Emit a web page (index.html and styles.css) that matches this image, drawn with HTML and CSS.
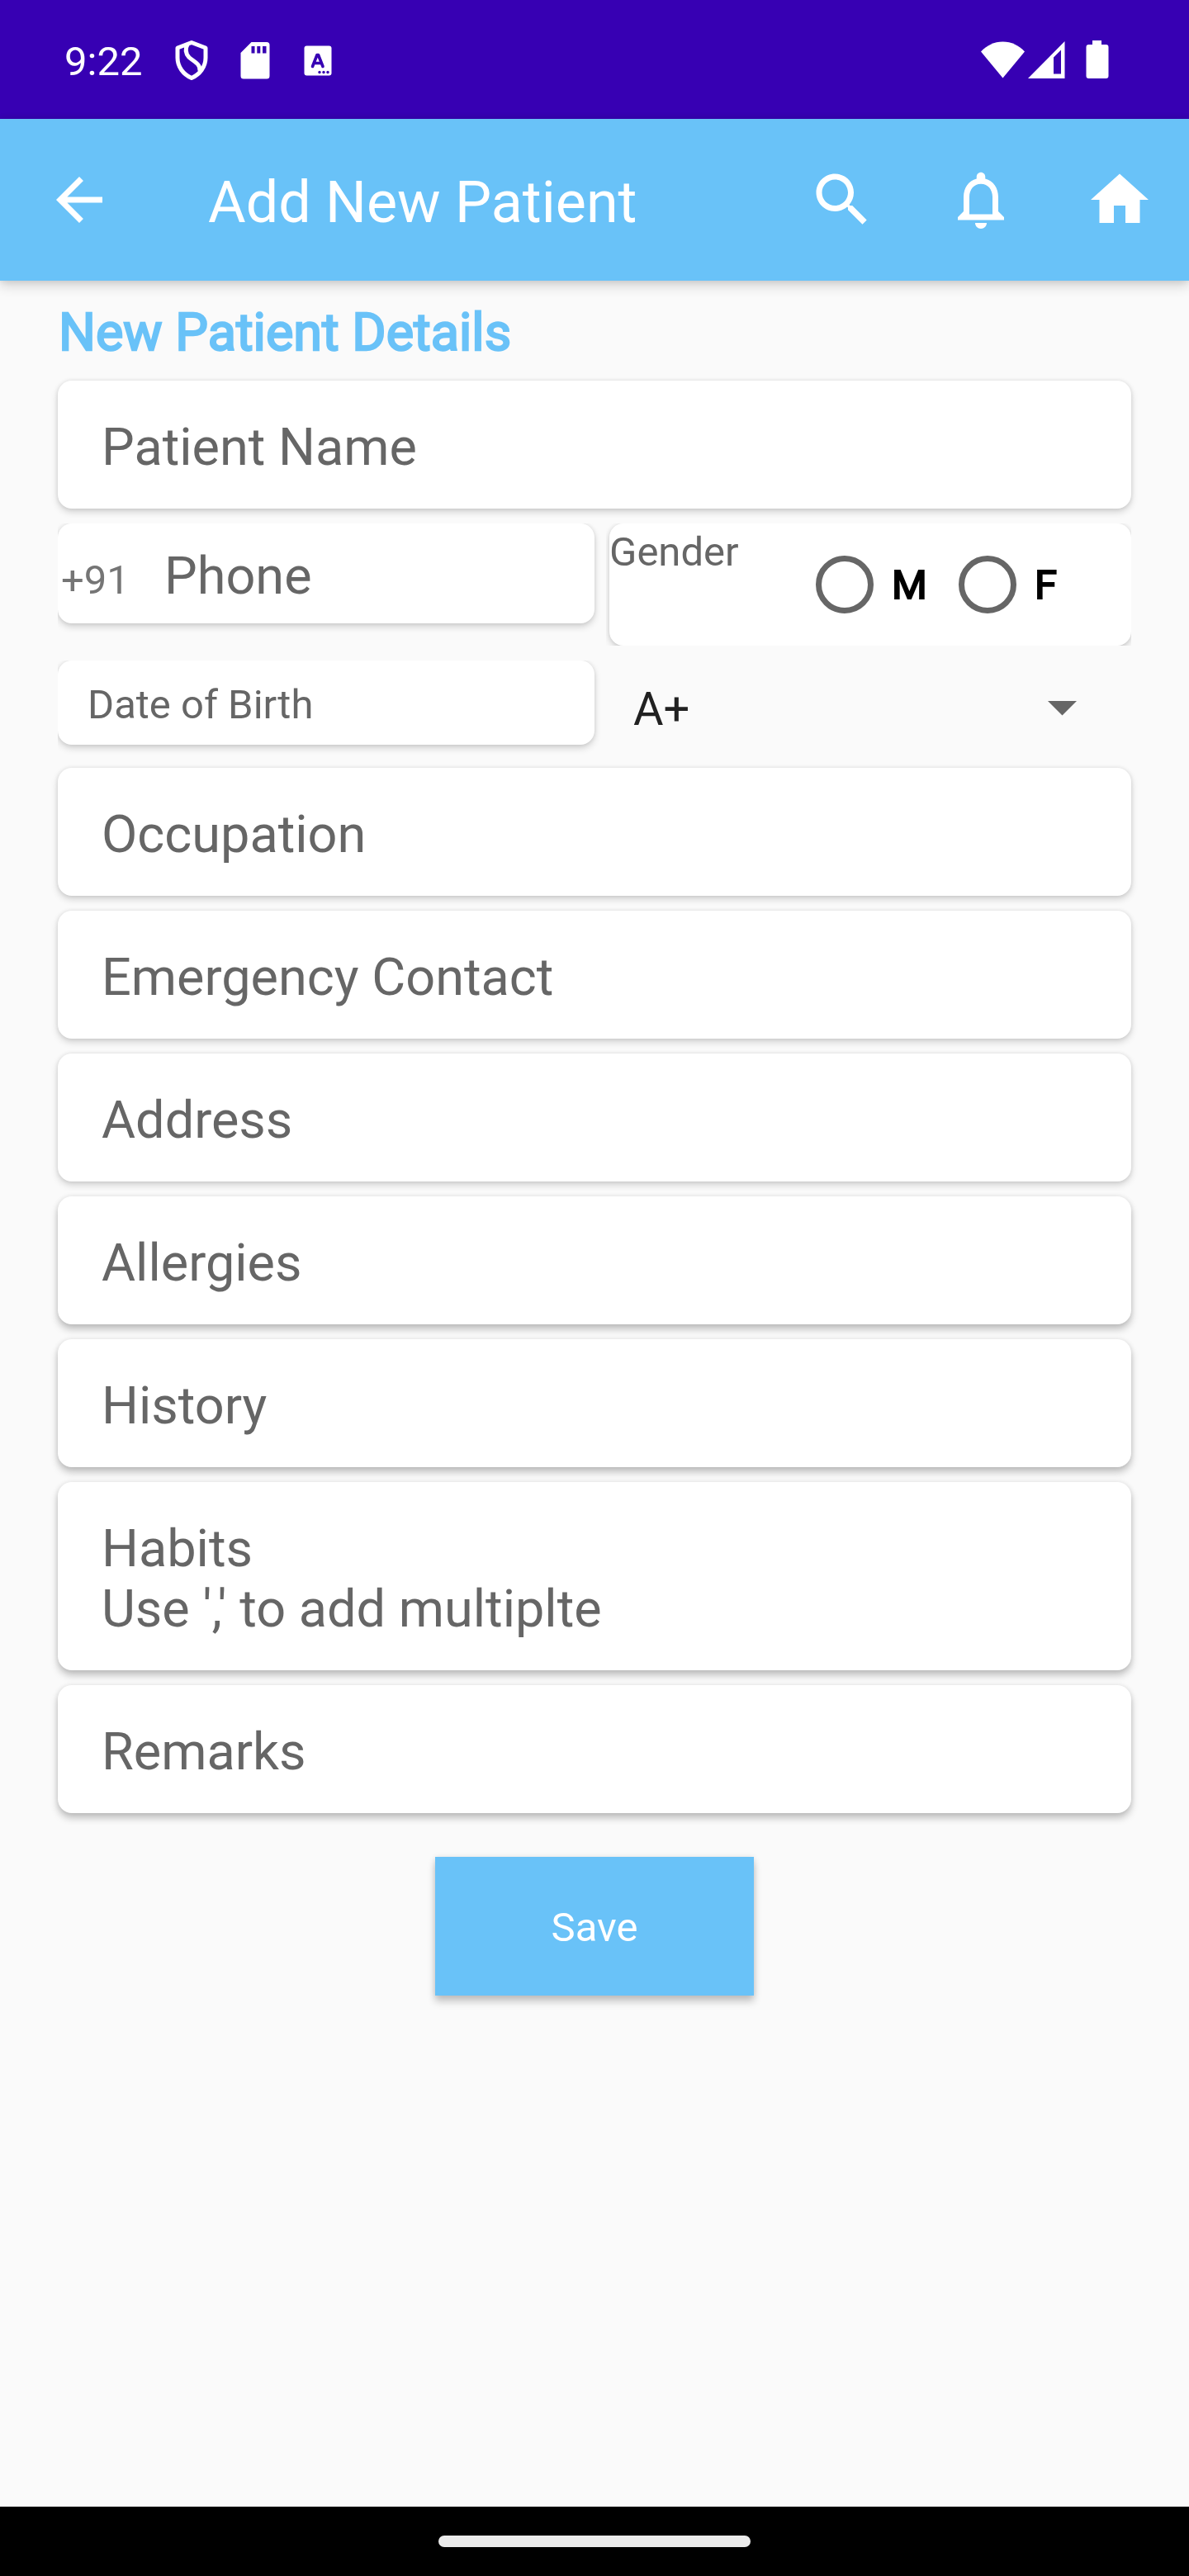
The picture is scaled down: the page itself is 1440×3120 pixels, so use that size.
FILE: index.html
```html
<!DOCTYPE html>
<html lang="en">
<head>
<meta charset="utf-8">
<title>Add New Patient</title>
<link rel="stylesheet" href="styles.css">
</head>
<body>
<header class="status-bar">
  <span class="clock">9:22</span>
  <svg class="st-shield" width="40" height="50" viewBox="0 0 40 50"><g fill="none" stroke="#fff" stroke-width="5" stroke-linejoin="round"><path d="M20 3.500 37 10V22C37 33 30 42 20 46.500C10 42 3 33 3 22V10Z"/><path d="M15.500 5C12 11 12 16 17 21.500C22 26 31 29 30 38"/></g></svg>
  <svg class="st-sd" width="36" height="45" viewBox="0 0 36 45"><path fill="#fff" fill-rule="evenodd" d="M13.500 0H32a3.500 3.500 0 0 1 3.500 3.500V41a3.500 3.500 0 0 1-3.500 3.500H4A3.500 3.500 0 0 1 .5 41V13ZM13.500 5v8.500h4V5ZM20.300 5v8.500h4V5ZM27 5v8.500h4.500V5Z"/></svg>
  <svg class="st-lang" width="34" height="37" viewBox="0 0 34 37"><rect x=".5" y=".5" width="33" height="36" rx="3" fill="#fff"/><path d="M10.500 25.500 16 11.500h1.500L23 25.500M12.500 21.500h8" fill="none" stroke="#3700b3" stroke-width="3.600" stroke-linecap="round" stroke-linejoin="round"/><g fill="#3700b3"><circle cx="19" cy="32.500" r="1.700"/><circle cx="24" cy="32.500" r="1.700"/><circle cx="29" cy="32.500" r="1.700"/></g></svg>
  <span class="spacer"></span>
  <svg class="st-wifi" width="54" height="45" viewBox="0 0 54 45"><path fill="#fff" d="M0 12.500C7 5 16 .5 26.500 .5S46 5 53 12.500L26.500 44.500Z"/></svg>
  <svg class="st-signal" width="45" height="45" viewBox="0 0 45 45"><path fill="#fff" fill-rule="evenodd" d="M44.500 0V45H0ZM40 10.500 31 19.500V39.500H40Z"/></svg>
  <svg class="st-battery" width="28" height="46" viewBox="0 0 28 46"><path fill="#fff" d="M8 0H19V5H24.500A3 3 0 0 1 27.500 8V43A3 3 0 0 1 24.500 46H3.500A3 3 0 0 1 .5 43V8A3 3 0 0 1 3.500 5H8Z"/></svg>
</header>
<nav class="app-bar">
  <svg class="icon" viewBox="0 0 24 24"><path d="M20 11H7.830l5.590-5.590L12 4l-8 8 8 8 1.410-1.410L7.830 13H20v-2z"/></svg>
  <h1 class="title">Add New Patient</h1>
  <div class="actions">
    <svg class="icon" viewBox="0 0 24 24"><path d="M15.500 14h-.79l-.28-.27C15.410 12.590 16 11.110 16 9.500 16 5.910 13.090 3 9.500 3S3 5.910 3 9.500 5.910 16 9.500 16c1.610 0 3.090-.59 4.230-1.570l.27.28v.79l5 4.990L20.490 19l-4.990-5zm-6 0C7.010 14 5 11.990 5 9.500S7.010 5 9.500 5 14 7.010 14 9.500 11.990 14 9.500 14z"/></svg>
    <svg class="icon" viewBox="0 0 24 24"><path d="M12 22c1.100 0 2-.9 2-2h-4c0 1.100.9 2 2 2zm6-6v-5c0-3.070-1.630-5.640-4.500-6.320V4c0-.83-.67-1.500-1.500-1.500s-1.500.67-1.500 1.500v.68C7.640 5.360 6 7.920 6 11v5l-2 2v1h16v-1l-2-2zm-2 1H8v-6c0-2.480 1.510-4.500 4-4.500s4 2.020 4 4.500v6z"/></svg>
    <svg class="icon" viewBox="0 0 24 24"><path d="M10 20v-6h4v6h5v-8h3L12 3 2 12h3v8z"/></svg>
  </div>
</nav>
<main class="form">
  <h2 class="heading">New Patient Details</h2>
  <div class="card field name">Patient Name</div>
  <div class="pairs">
    <div class="card phone"><span class="code">+91</span><span class="number">Phone</span></div>
    <div class="card gender">
      <span class="gender-label">Gender</span>
      <span class="radio"></span><span class="option option-m">M</span>
      <span class="radio"></span><span class="option">F</span>
    </div>
    <div class="card dob">Date of Birth</div>
    <div class="blood"><span>A+</span><svg width="35" height="18" viewBox="0 0 35 18"><path fill="#666" d="M0 0H35L17.500 17.500Z"/></svg></div>
  </div>
  <div class="stack">
    <div class="card field">Occupation</div>
    <div class="card field">Emergency Contact</div>
    <div class="card field">Address</div>
    <div class="card field low">Allergies</div>
    <div class="card field low">History</div>
    <div class="card field low multiline">Habits<br>Use ',' to add multiplte</div>
    <div class="card field low">Remarks</div>
  </div>
  <div class="save">Save</div>
</main>
<footer class="nav-bar"><span class="pill"></span></footer>
</body>
</html>
```
FILE: styles.css
```css
* { box-sizing: border-box; }
body {
  margin: 0;
  width: 1440px;
  height: 3120px;
  display: flex;
  flex-direction: column;
  background: #fafafa;
  font-family: Roboto, sans-serif;
  font-size: 49px;
  color: #666;
  overflow: hidden;
}
svg { display: block; flex: none; }

.status-bar {
  height: 144px;
  flex: none;
  display: flex;
  align-items: flex-start;
  background: #3700b3;
  color: #fff;
}
.clock { width: 134px; margin: 46px 0 0 78px; line-height: 57px; white-space: nowrap; }
.st-shield { margin-top: 48px; }
.st-sd { margin: 51px 0 0 39px; }
.st-lang { margin: 55px 0 0 41px; }
.spacer { flex: 1; }
.st-wifi { margin-top: 50px; }
.st-signal { margin: 50px 0 0 3px; }
.st-battery { margin: 49px 97px 0 25px; }

.app-bar {
  position: relative;
  height: 196px;
  flex: none;
  display: flex;
  align-items: center;
  padding: 0 42px 8px 54px;
  background: #69c2f8;
  color: #fff;
  box-shadow: 0 6px 14px rgba(0, 0, 0, .16), 0 0 8px rgba(0, 0, 0, .1);
}
.icon { width: 84px; height: 84px; fill: #fff; margin-top: 8px; }
.title { flex: 1; margin: 13px 0 0 114px; font-size: 70px; font-weight: 400; line-height: 82px; }
.actions { display: flex; gap: 84px; }

.form { flex: 1; padding: 0 70px; }
.heading { margin: 23px 0 0; padding-left: 1px; font-size: 63px; line-height: 80px; height: 98px; font-weight: 400; color: #69c2f8; -webkit-text-stroke: 2.3px #69c2f8; }

.card {
  background: #fff;
  border-radius: 17px;
  box-shadow: 0 4px 9px rgba(0, 0, 0, .17), 0 0 5px rgba(0, 0, 0, .09);
}
.low { box-shadow: 0 6px 10px rgba(0, 0, 0, .23), 0 0 6px rgba(0, 0, 0, .09); }
.field { padding: 44px 52px 37px 53px; font-size: 63px; line-height: 74px; }
.multiline { padding-top: 44px; padding-bottom: 38px; line-height: 73px; }

.pairs { display: grid; grid-template-columns: 650px 632px; column-gap: 18px; grid-template-rows: 166px 130px; margin-top: 18px; align-items: start; }
.phone { display: flex; height: 121px; align-items: baseline; padding: 27px 0 0 4px; line-height: 74px; clip-path: inset(0 -17px -17px 0); }
.code { width: 125px; color: #757575; }
.number { font-size: 63px; }
.gender { display: flex; height: 148px; clip-path: inset(0 0 0 -4px); }
.gender-label { width: 250px; margin-top: 6px; line-height: 57px; }
.radio { width: 70px; height: 70px; margin-top: 39px; border: 7px solid #666; border-radius: 50%; flex: none; }
.option { margin: 46px 0 0 22px; line-height: 58px; color: #000; -webkit-text-stroke: 2px #000; }
.option-m { width: 81px; }
.dob { height: 102px; padding: 25px 0 0 36px; line-height: 57px; clip-path: inset(0 -17px -17px 0); }
.blood { display: flex; justify-content: space-between; padding: 26px 66px 0 29px; font-size: 56px; line-height: 66px; color: #212121; }
.blood svg { margin-top: 23px; }

.stack { display: flex; flex-direction: column; gap: 18px; }
.save {
  width: 386px;
  height: 168px;
  margin: 53px auto 0;
  background: #69c2f8;
  color: #fff;
  text-align: center;
  line-height: 172px;
  box-shadow: 0 7px 9px rgba(0, 0, 0, .22), 0 0 7px rgba(0, 0, 0, .09);
}
.nav-bar { height: 84px; flex: none; background: #000; display: flex; justify-content: center; padding-top: 35px; }
.pill { width: 378px; height: 14px; border-radius: 7px; background: #ebebeb; }
```
